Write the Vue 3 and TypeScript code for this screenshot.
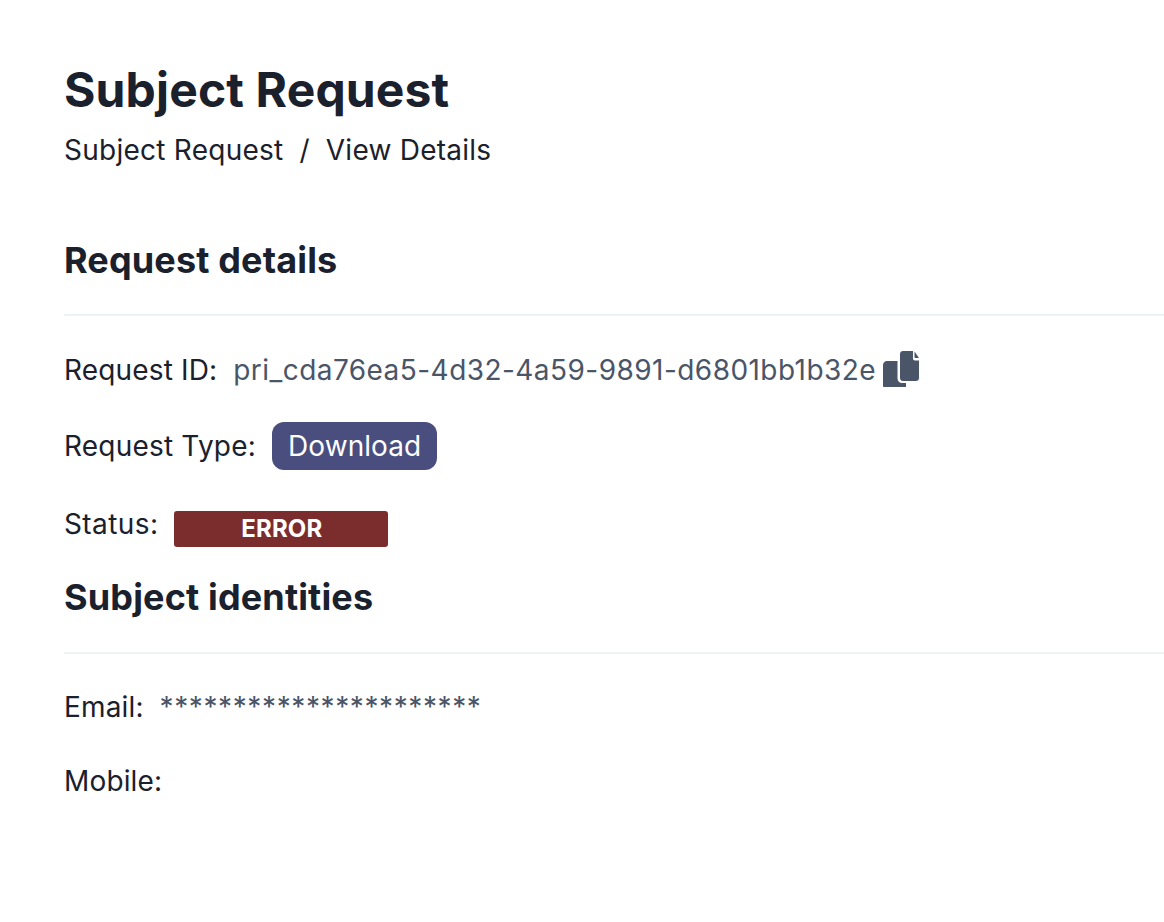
<template>
  <main class="page">
    <h1 class="title">Subject Request</h1>
    <nav class="crumbs">
      <span>Subject Request</span>
      <span class="sep">/</span>
      <span>View Details</span>
    </nav>

    <section class="details">
      <h2 class="heading">Request details</h2>
      <hr class="rule" />
      <div class="row row-id">
        <span class="label">Request ID:</span>
        <span class="value id">{{ requestId }}</span>
        <svg class="copy" viewBox="0 0 37 36" aria-hidden="true">
          <path d="M17 3c0-1.700 1.300-3 3-3h10v7.500c0 1.200.8 2 2 2h4V27c0 1.700-1.300 3-3 3H20c-1.700 0-3-1.300-3-3z" />
          <path d="M31.500 .5L36 7h-3.500c-.6 0-1-.4-1-1z" />
          <path d="M14.500 10v17.500c0 2.700 2 4.500 4.500 4.500h4v4H1c-.6 0-1-.4-1-1V14c0-2.200 1.800-4 4-4z" />
        </svg>
      </div>
      <div class="row row-type">
        <span class="label label-type">Request Type:</span>
        <span class="tag">Download</span>
      </div>
      <div class="row row-status">
        <span class="label label-status">Status:</span>
        <span class="badge">ERROR</span>
      </div>
    </section>

    <section class="identities">
      <h2 class="heading">Subject identities</h2>
      <hr class="rule rule-low" />
      <div class="row row-email">
        <span class="label">Email:</span>
        <span class="value masked">{{ maskedEmail }}</span>
      </div>
      <div class="row row-mobile">
        <span class="label">Mobile:</span>
      </div>
    </section>
  </main>
</template>

<script setup lang="ts">
const requestId = 'pri_cda76ea5-4d32-4a59-9891-d6801bb1b32e'
const maskedEmail = '*'.repeat(22)
</script>

<style>
html,
body {
  margin: 0;
  background: #fff;
}
</style>

<style scoped>
.page {
  box-sizing: border-box;
  width: 1164px;
  height: 922px;
  overflow: hidden;
  padding: 61px 0 0 64px;
  font-family: Inter, "Liberation Sans", sans-serif;
  color: #1a202c;
  letter-spacing: 0.15px;
}

.title {
  margin: 0;
  font-size: 48px;
  line-height: 58px;
  font-weight: 700;
}

.crumbs {
  display: flex;
  gap: 16px;
  margin-top: 13px;
  font-size: 28px;
  line-height: 36px;
  letter-spacing: 0.25px;
}

.details {
  margin-top: 70px;
}

.heading {
  margin: 0;
  font-size: 36px;
  line-height: 44px;
  font-weight: 700;
}

.rule {
  height: 2px;
  margin: 32px 0 0;
  border: 0;
  background: #edf2f7;
}

.rule-low {
  margin-top: 33px;
}

.row {
  display: flex;
  align-items: center;
  gap: 16px;
  font-size: 28px;
  line-height: 36px;
}

.row-id {
  margin-top: 36px;
}

.row-type {
  margin-top: 34px;
}

.row-status {
  align-items: flex-start;
  margin-top: 36px;
}

.row-email {
  margin-top: 35px;
}

.row-mobile {
  margin-top: 38px;
}

.label-type {
  letter-spacing: 0.2px;
}

.label-status {
  letter-spacing: 0.4px;
}

.value {
  color: #4a5568;
}

.id {
  letter-spacing: 0.45px;
}

.masked {
  letter-spacing: 0.6px;
}

.copy {
  width: 37px;
  height: 36px;
  margin: -3px 0 0 -9px;
  fill: #4a5568;
}

.tag {
  padding: 6px 16px;
  border-radius: 12px;
  background: #494e7f;
  color: #fff;
  letter-spacing: 0.08px;
}

.badge {
  width: 214px;
  height: 36px;
  margin-top: 5px;
  border-radius: 3px;
  background: #7b2d2d;
  color: #fff;
  font-size: 24px;
  line-height: 36px;
  font-weight: 700;
  text-align: center;
  text-indent: 1px;
}

.identities {
  margin-top: 28px;
}
</style>
